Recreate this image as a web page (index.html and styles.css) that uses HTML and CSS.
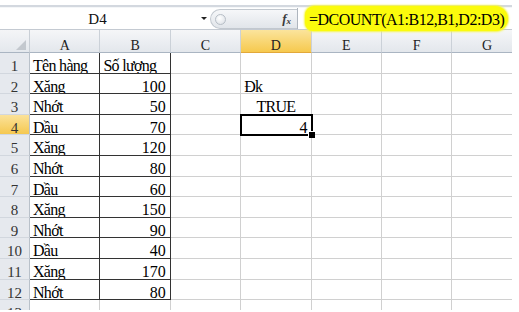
FILE: index.html
```html
<!doctype html>
<html>
<head>
    <meta charset="utf-8">
    <title>DCOUNT</title>
    <link rel="stylesheet" href="styles.css">
</head>
<body>
    <div class="top"></div>
    <div class="fbar">
        <div class="namebox"><span class="ref">D4</span><span class="arrow"></span></div>
        <div class="fxarea"><span class="knob"></span><span class="fx">f<sub>x</sub></span></div>
        <div class="formula"><span class="mark">=DCOUNT(A1:B12,B1,D2:D3)</span></div>
    </div>
    <div class="sheet">
        <div class="corner"><span class="tri"></span></div><div class="hd">A</div><div class="hd">B</div><div class="hd">C</div><div class="hd sel">D</div><div class="hd">E</div><div class="hd">F</div><div class="hd">G</div>

        <div class="rh">1</div><div class="c d">Tên hàng</div><div class="c d">Số lượng</div><div class="c"></div><div class="c"></div><div class="c"></div><div class="c"></div><div class="c"></div>
        <div class="rh">2</div><div class="c d">Xăng</div><div class="c d r">100</div><div class="c"></div><div class="c">Đk</div><div class="c"></div><div class="c"></div><div class="c"></div>
        <div class="rh">3</div><div class="c d">Nhớt</div><div class="c d r">50</div><div class="c"></div><div class="c ctr">TRUE</div><div class="c"></div><div class="c"></div><div class="c"></div>
        <div class="rh sel">4</div><div class="c d">Dầu</div><div class="c d r">70</div><div class="c"></div><div class="c r cur">4</div><div class="c"></div><div class="c"></div><div class="c"></div>
        <div class="rh">5</div><div class="c d">Xăng</div><div class="c d r">120</div><div class="c"></div><div class="c"></div><div class="c"></div><div class="c"></div><div class="c"></div>
        <div class="rh">6</div><div class="c d">Nhớt</div><div class="c d r">80</div><div class="c"></div><div class="c"></div><div class="c"></div><div class="c"></div><div class="c"></div>
        <div class="rh">7</div><div class="c d">Dầu</div><div class="c d r">60</div><div class="c"></div><div class="c"></div><div class="c"></div><div class="c"></div><div class="c"></div>
        <div class="rh">8</div><div class="c d">Xăng</div><div class="c d r">150</div><div class="c"></div><div class="c"></div><div class="c"></div><div class="c"></div><div class="c"></div>
        <div class="rh">9</div><div class="c d">Nhớt</div><div class="c d r">90</div><div class="c"></div><div class="c"></div><div class="c"></div><div class="c"></div><div class="c"></div>
        <div class="rh">10</div><div class="c d">Dầu</div><div class="c d r">40</div><div class="c"></div><div class="c"></div><div class="c"></div><div class="c"></div><div class="c"></div>
        <div class="rh">11</div><div class="c d">Xăng</div><div class="c d r">170</div><div class="c"></div><div class="c"></div><div class="c"></div><div class="c"></div><div class="c"></div>
        <div class="rh">12</div><div class="c d">Nhớt</div><div class="c d r">80</div><div class="c"></div><div class="c"></div><div class="c"></div><div class="c"></div><div class="c"></div>
        <div class="rh">13</div><div class="c"></div><div class="c"></div><div class="c"></div><div class="c"></div><div class="c"></div><div class="c"></div><div class="c"></div>
    </div>
</body>
</html>
```

FILE: styles.css
```css
*{margin:0; padding:0; box-sizing:border-box;}
body{
    background:#fff;
    font-family:"Liberation Serif", "Times New Roman", serif;
    color:#000;
}

/* thanh tren cung */
.top{
    width:512px;
    height:3px;
    margin-top:5px;
    border-top:2px solid #d3d8df;
    background:#f4f6f8;
}

/* thanh cong thuc */
.fbar{
    position:relative;
    z-index:1;
    display:flex;
    width:512px;
    height:22px;
    border-bottom:1px solid #c4cad2;
}
.namebox{
    width:210px;
    display:flex;
    align-items:center;
}
.ref{
    width:195px;
    padding-top:1px;
    text-align:center;
    font-size:15px;
    line-height:21px;
    color:#111;
}
.arrow{
    width:0;
    height:0;
    margin-left:6px;
    border-left:3px solid transparent;
    border-right:3px solid transparent;
    border-top:3px solid #222;
}
.fxarea{
    width:87px;
    margin:1px 0 0;
    display:flex;
    align-items:center;
    background:linear-gradient(#f6f7f9, #e1e5ea);
    border:1px solid #c2c8cf;
    border-right:none;
    border-radius:10px 0 0 10px;
}
.knob{
    width:11px;
    height:11px;
    margin-left:4px;
    border-radius:50%;
    border:1px solid #b7bec6;
    background:radial-gradient(circle at 40% 35%, #fff, #d8dde3);
}
.fx{
    margin-left:auto;
    margin-right:6px;
    font-size:13px;
    font-style:italic;
    font-weight:bold;
    color:#3a3a3a;
}
.fx sub{
    font-size:9px;
    vertical-align:-1px;
}
.formula{
    flex:1;
    padding-left:7px;
    border-left:1px solid #aeb5be;
}
.mark{
    display:inline-block;
    margin-top:-2px;
    height:25px;
    padding:4px 4px 1px;
    line-height:20px;
    font-size:16px;
    letter-spacing:-0.5px;
    background:#fbfb0c;
    border-radius:9px 13px 12px 8px;
    box-shadow:0 0 2px 1px #f6f64a;
}

/* bang tinh */
.sheet{
    display:grid;
    grid-template-columns:30px repeat(7, 70.4px);
    grid-template-rows:23px;
    grid-auto-rows:20.6px;
    width:512px;
    height:280px;
    overflow:hidden;
}
.corner{
    display:flex;
    align-items:flex-end;
    justify-content:flex-end;
    padding:0 3px 2px 0;
    background:linear-gradient(#f4f5f7, #e4e8ed);
    border-right:1px solid #c9cfd6;
    border-bottom:1px solid #aab5c2;
}
.tri{
    width:0;
    height:0;
    border-left:10px solid transparent;
    border-bottom:10px solid #c3c8ce;
}
.hd{
    padding-top:8px;
    line-height:16px;
    font-size:14px;
    text-align:center;
    color:#222;
    background:linear-gradient(#f5f6f8, #e3e7ec);
    border-right:1px solid #cbd1d8;
    border-bottom:1px solid #aab5c2;
}
.hd.sel{
    background:linear-gradient(#fbe49c, #f6c94e);
    border-bottom-color:#e2a83a;
}
.rh{
    padding-top:4px;
    line-height:18px;
    font-size:15px;
    text-align:center;
    color:#333;
    background:#e6e9ee;
    border-right:1px solid #b9c1ca;
    border-bottom:1px solid #d2d7de;
}
.rh.sel{
    background:linear-gradient(#fbe29a, #f5c850);
}
.c{
    padding:4px 3px 0;
    line-height:18px;
    font-size:16px;
    letter-spacing:-0.7px;
    white-space:nowrap;
    overflow:hidden;
    border-right:1px solid #d0d0d0;
    border-bottom:1px solid #d0d0d0;
}
.c.d{
    border-color:#333;
}
.r{
    text-align:right;
    padding-right:4px;
    letter-spacing:0;
}
.ctr{
    text-align:center;
}
.cur{
    position:relative;
    overflow:visible;
    padding-right:3px;
    outline:2px solid #000;
    outline-offset:-1px;
}
.cur:after{
    content:"";
    position:absolute;
    right:-4px;
    bottom:-4px;
    width:6px;
    height:6px;
    background:#000;
    border-top:1px solid #fff;
    border-left:1px solid #fff;
}
```
